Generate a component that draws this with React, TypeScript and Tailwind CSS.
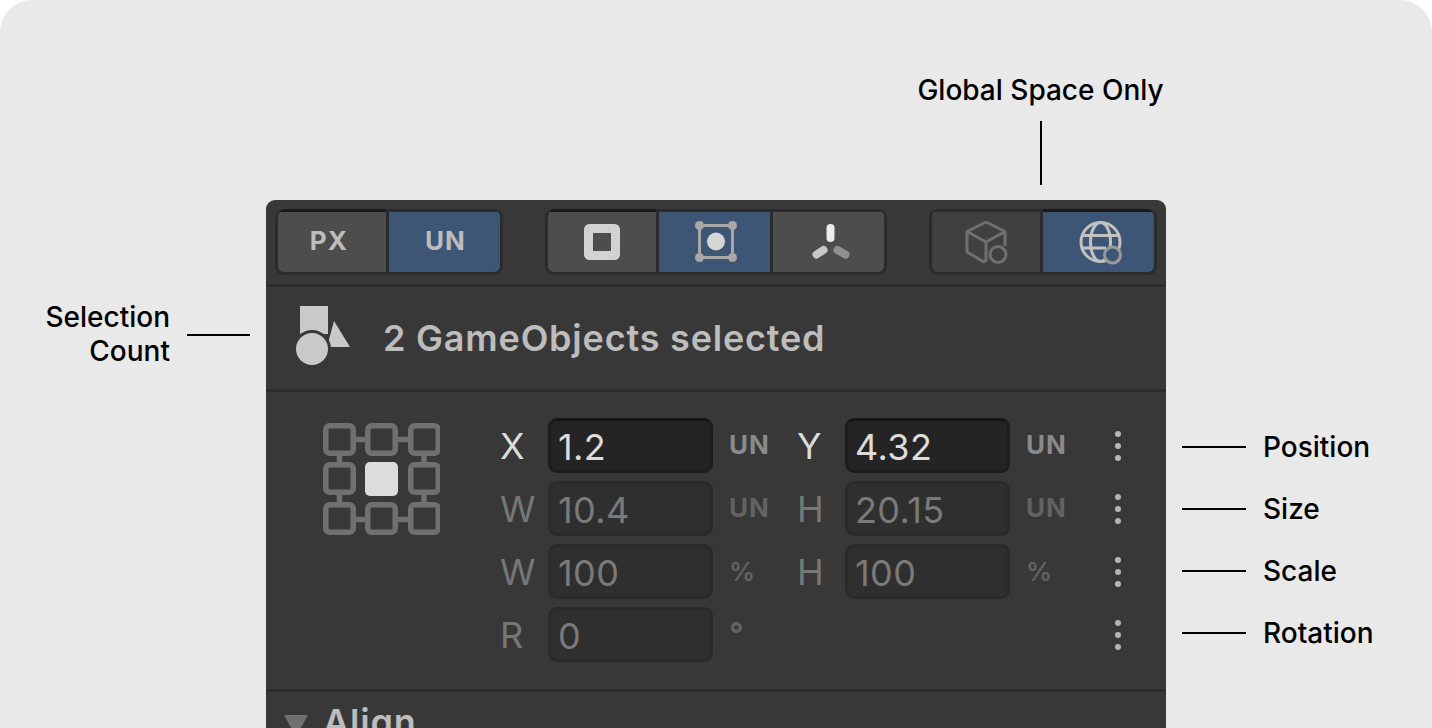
import React from "react";

const font = { fontFamily: "Inter, sans-serif" };

function Seg({ children, w, blue, dim, darkTop, extra = "" }: { children: React.ReactNode; w: string; blue?: boolean; dim?: boolean; darkTop?: boolean; extra?: string }) {
  return (
    <div
      className={`${w} h-[63px] border-t-[3px] flex items-center justify-center text-[26px] font-bold tracking-[1.2px] text-[#bdbdbd] ${extra} ${
        darkTop ? "border-t-[#191919]" : "border-t-[#2b2b2b]"
      } ${blue ? "bg-[#3e5676]" : dim ? "bg-[#404040]" : "bg-[#4d4d4d]"}`}
    >
      {children}
    </div>
  );
}

function Group({ children }: { children: React.ReactNode }) {
  return (
    <div className="flex h-[66px] rounded-[9px] overflow-hidden border-[3px] border-t-0 border-[#2b2b2b] bg-[#2b2b2b] gap-[3px]">
      {children}
    </div>
  );
}

function Field({ label, value, unit, active }: { label: string; value: string; unit: string; active?: boolean }) {
  const unitStyle =
    unit === "°"
      ? "text-[32px] font-bold"
      : unit === "%"
      ? "text-[26px] font-semibold -mt-[1px]"
      : "text-[26px] font-bold tracking-[1px] -mt-[3px]";
  return (
    <div className="flex items-center">
      <div className={`w-[48px] text-[36px] leading-[55px] pt-[2px] ${active ? "text-[#dcdcdc]" : "text-[#777777]"}`}>{label}</div>
      <div
        className={`w-[165px] h-[55px] rounded-[9px] border-[3px] pl-[7px] pt-[2px] flex items-center text-[36px] tracking-[0.4px] ${
          active
            ? "bg-[#242424] border-[#1d1d1d] border-t-[#161616] text-[#dcdcdc]"
            : "bg-[#2f2f2f] border-[#2a2a2a] text-[#7a7a7a]"
        }`}
      >
        {value}
      </div>
      <div className={`w-[84px] pl-[16px] ${unitStyle} ${active ? "text-[#8a8a8a]" : "text-[#626262]"}`}>{unit}</div>
    </div>
  );
}

function Dots() {
  return (
    <div className="flex flex-col items-center gap-[6px] w-[6px]">
      <div className="w-[6px] h-[6px] rounded-full bg-[#b5b5b5]" />
      <div className="w-[6px] h-[6px] rounded-full bg-[#b5b5b5]" />
      <div className="w-[6px] h-[6px] rounded-full bg-[#b5b5b5]" />
    </div>
  );
}

function Row({ a, b, dim }: { a: [string, string, string]; b?: [string, string, string]; dim?: boolean }) {
  return (
    <div className="h-[55px] flex items-center">
      <div className="w-[297px] shrink-0">
        <Field label={a[0]} value={a[1]} unit={a[2]} active={!dim} />
      </div>
      <div className="w-[318px] shrink-0">
        {b ? <Field label={b[0]} value={b[1]} unit={b[2]} active={!dim} /> : null}
      </div>
      <Dots />
    </div>
  );
}

function AnchorGrid() {
  const xs = [0, 42, 85];
  const ys = [0, 39, 79];
  return (
    <svg width="117" height="113" viewBox="0 0 117 113" className="shrink-0 mt-[5px]">
      <g fill="none" stroke="#707070" strokeWidth="5.5">
        <path d="M33 16.5h9M75 16.5h10M33 96.5h9M75 96.5h10M16.5 33v6M16.5 72v7M101 33v6M101 72v7" />
        {ys.map((y, r) =>
          xs.map((x, c) =>
            r === 1 && c === 1 ? null : (
              <rect key={`${r}${c}`} x={x + 2.75} y={y + 2.75} width="27.5" height="27.5" rx="4" />
            )
          )
        )}
      </g>
      <rect x="42" y="39" width="33" height="34" rx="5" fill="#dcdcdc" />
    </svg>
  );
}

function Annot({ label }: { label: string }) {
  return (
    <div className="h-[62px] flex items-center">
      <div className="w-[64px] h-[2px] bg-black shrink-0" />
      <div className="pl-[17px] text-[28px] font-medium text-black whitespace-nowrap">{label}</div>
    </div>
  );
}

export default function App() {
  return (
    <div className="w-[1432px] h-[728px] bg-white overflow-hidden" style={font}>
      <div className="h-[728px] bg-[#e9e9e9] rounded-t-[32px] overflow-hidden">
        <div className="h-[200px] flex flex-col items-center pl-[649px] w-[1432px]">
          <div className="mt-[72px] h-[37px] leading-[37px] text-[28px] font-medium text-black whitespace-nowrap">
            Global Space Only
          </div>
          <div className="mt-[12px] w-[2px] h-[64px] bg-black ml-[1px]" />
        </div>
        <div className="flex h-[528px]">
          <div className="w-[266px] shrink-0 pt-[100px] flex items-start">
            <div className="w-[170px] text-right text-[28px] leading-[34px] font-medium text-black">
              Selection
              <br />
              Count
            </div>
            <div className="ml-[17px] mt-[34px] w-[63px] h-[2px] bg-black" />
          </div>

          <div className="w-[900px] shrink-0 bg-[#383838] rounded-t-[9px] overflow-hidden">
            <div className="h-[87px] border-b-[3px] border-[#2b2b2b] pt-[9px] pl-[9px] flex gap-[42px]">
              <Group>
                <Seg w="w-[108px]" darkTop extra="pr-[6px] pb-[4px]">PX</Seg>
                <Seg w="w-[111px]" blue extra="pl-[2px] pb-[4px]">UN</Seg>
              </Group>
              <Group>
                <Seg w="w-[108px]" darkTop>
                  <svg width="36" height="36" viewBox="0 0 36 36">
                    <rect x="4.5" y="4.5" width="27" height="27" fill="none" stroke="#d2d2d2" strokeWidth="9" rx="1" />
                  </svg>
                </Seg>
                <Seg w="w-[111px]" blue>
                  <svg width="46" height="46" viewBox="-1 0 46 46">
                    <rect x="6.5" y="6.5" width="33" height="32" fill="none" stroke="#a8a8a8" strokeWidth="3" />
                    <circle cx="6.5" cy="6.5" r="4.5" fill="#a8a8a8" />
                    <circle cx="39.5" cy="6.5" r="4.5" fill="#a8a8a8" />
                    <circle cx="6.5" cy="38.5" r="4.5" fill="#a8a8a8" />
                    <circle cx="39.5" cy="38.5" r="4.5" fill="#a8a8a8" />
                    <circle cx="23" cy="22.5" r="9" fill="#d6d6d6" />
                  </svg>
                </Seg>
                <Seg w="w-[111px]">
                  <svg width="44" height="40" viewBox="0 0 44 40">
                    <path d="M23.5 6v10" stroke="#ececec" strokeWidth="8" strokeLinecap="round" />
                    <path d="M9.5 32.5L16.5 28" stroke="#c8c8c8" strokeWidth="8" strokeLinecap="round" />
                    <path d="M30.5 28L38.5 32.5" stroke="#909090" strokeWidth="8" strokeLinecap="round" />
                  </svg>
                </Seg>
              </Group>
              <Group>
                <Seg w="w-[108px]" dim>
                  <svg width="46" height="46" viewBox="0 0 46 46" fill="none" stroke="#707070" strokeWidth="3" strokeLinejoin="round">
                    <path d="M23 3L42 12.5V27M23 3L4 12.5V33L22 43.5M4 12.5L23 23M42 12.5L23 23V43" />
                    <circle cx="35" cy="35.5" r="8" />
                  </svg>
                </Seg>
                <Seg w="w-[111px]" blue darkTop>
                  <svg width="46" height="46" viewBox="0 0 46 46" fill="none" stroke="#c2c2c2" strokeWidth="3">
                    <circle cx="24.5" cy="23" r="19.5" />
                    <ellipse cx="24.5" cy="23" rx="10" ry="19.5" />
                    <path d="M7 16.5H42M5 29H30" />
                    <circle cx="36.5" cy="36" r="8" fill="#3e5676" stroke="#9a9a9a" />
                  </svg>
                </Seg>
              </Group>
            </div>

            <div className="h-[105px] border-b-[3px] border-[#2b2b2b] flex items-center pl-[29px]">
              <svg width="56" height="62" viewBox="0 0 56 62" className="shrink-0 -mt-[2px]">
                <rect x="5" y="0" width="28" height="28" fill="#c9c9c9" />
                <path d="M39 15L55 41H32Z" fill="#c9c9c9" />
                <circle cx="17" cy="43" r="17.5" fill="#c9c9c9" stroke="#383838" strokeWidth="3" />
              </svg>
              <div className="ml-[32px] text-[36px] font-semibold tracking-[0.8px] text-[#bdbdbd] whitespace-nowrap">
                2 GameObjects selected
              </div>
            </div>

            <div className="h-[300px] border-b-[3px] border-[#2b2b2b] pt-[26px] pl-[57px] flex">
              <div className="w-[177px] shrink-0">
                <AnchorGrid />
              </div>
              <div className="flex flex-col gap-[8px]">
                <Row a={["X", "1.2", "UN"]} b={["Y", "4.32", "UN"]} />
                <Row dim a={["W", "10.4", "UN"]} b={["H", "20.15", "UN"]} />
                <Row dim a={["W", "100", "%"]} b={["H", "100", "%"]} />
                <Row dim a={["R", "0", "°"]} />
              </div>
            </div>

            <div className="flex items-center pl-[18px] pt-[10px]">
              <svg width="24" height="24" viewBox="0 0 24 24" className="mt-[8px] shrink-0">
                <path d="M0 0H24L12 22Z" fill="#707070" />
              </svg>
              <div className="ml-[15px] text-[36px] leading-[41px] font-semibold tracking-[0.8px] text-[#bdbdbd]">Align</div>
            </div>
          </div>

          <div className="w-[266px] shrink-0 pt-[216px] pl-[16px]">
            <Annot label="Position" />
            <Annot label="Size" />
            <Annot label="Scale" />
            <Annot label="Rotation" />
          </div>
        </div>
      </div>
    </div>
  );
}
